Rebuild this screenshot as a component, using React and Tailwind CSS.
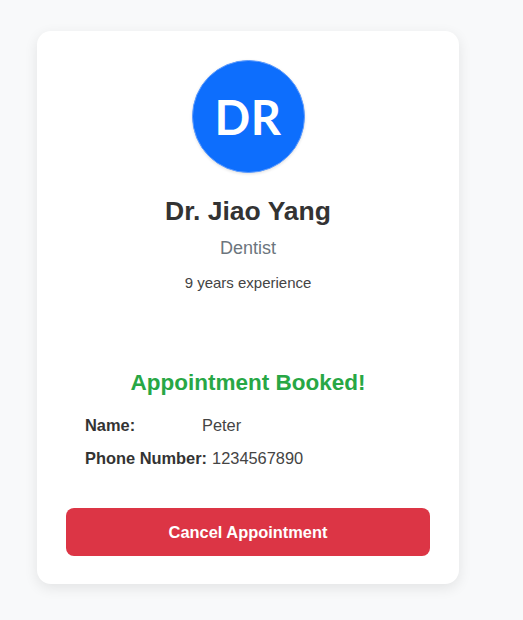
import React from "react";

const DoctorCard = () => {
  return (
    <div className="w-[422px] ml-[37px] bg-white rounded-[14px] shadow-[0_4px_14px_rgba(0,0,0,0.09)] px-[29px] pt-[29px] pb-[28px] flex flex-col items-center">
      {/* Avatar */}
      <div className="w-[113px] h-[113px] rounded-full bg-[#0d6efd] border border-[#5c9bff] flex items-center justify-center shadow-[0_1px_3px_rgba(0,0,0,0.12)]">
        <span className="text-white text-[47px] font-bold tracking-[0.5px] font-['Lato','Open_Sans',sans-serif] leading-none mt-[1px]">
          DR
        </span>
      </div>

      <h2 className="mt-[23px] text-[26.5px] leading-[30px] font-bold text-[#333333]">
        Dr. Jiao Yang
      </h2>
      <p className="mt-[11px] text-[18px] leading-[22px] text-[#6c757d]">Dentist</p>
      <p className="mt-[14px] text-[15px] leading-[20px] text-[#444444]">9 years experience</p>

      {/* Booking result */}
      <h3 className="mt-[76px] text-[22.5px] leading-[27px] font-bold text-[#28a745]">
        Appointment Booked!
      </h3>

      <div className="w-full px-[19px] mt-[19px] flex flex-col gap-[13px]">
        <div className="flex text-[16.4px] leading-[20px]">
          <span className="font-bold text-[#333333] min-w-[117px]">Name:</span>
          <span className="text-[#444444]">Peter</span>
        </div>
        <div className="flex text-[16.4px] leading-[20px]">
          <span className="font-bold text-[#333333] mr-[5px]">Phone Number:</span>
          <span className="text-[#444444]">1234567890</span>
        </div>
      </div>

      <button className="mt-[40px] w-full h-[48px] rounded-[8px] bg-[#dc3545] text-white text-[16.4px] font-bold">
        Cancel Appointment
      </button>
    </div>
  );
};

export default function App() {
  return (
    <div className="min-h-[620px] bg-[#f8f9fa] pt-[31px] font-['Liberation_Sans',Arial,sans-serif]">
      <DoctorCard />
    </div>
  );
}
